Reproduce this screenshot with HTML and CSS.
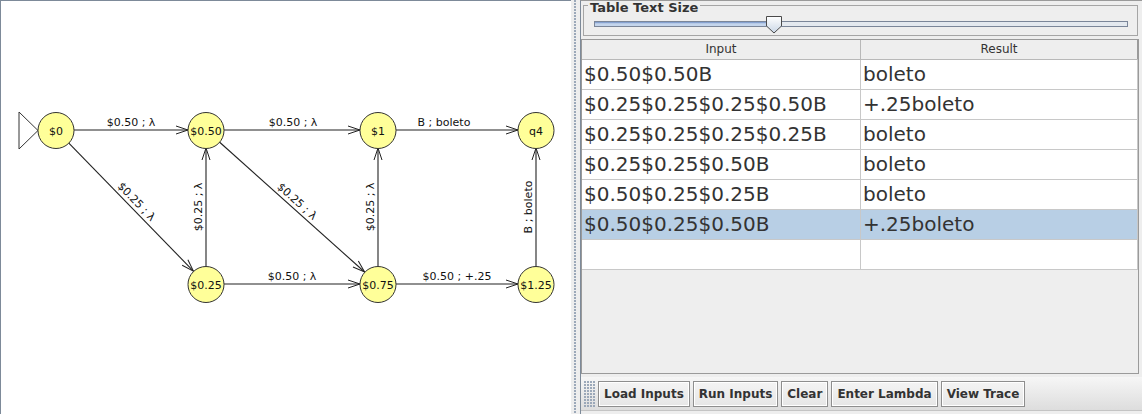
FILE: index.html
```html
<!DOCTYPE html>
<html>
<head>
<meta charset="utf-8">
<link rel="stylesheet" href="styles.css">
</head>
<body>
<div class="app">
  <div class="canvas">
    <svg class="diagram" width="570" height="413" viewBox="0 0 570 413" xmlns="http://www.w3.org/2000/svg">
      <defs>
        <marker id="arr" markerUnits="userSpaceOnUse" markerWidth="16" markerHeight="12" refX="13" refY="6" orient="auto">
          <path d="M1 2 L13 6 L1 10" fill="none" stroke="#222" stroke-width="1"/>
        </marker>
      </defs>
      <g class="edges" stroke="#222" stroke-width="1.1" fill="none">
        <line x1="73" y1="129" x2="187" y2="129" marker-end="url(#arr)"/>
        <line x1="223" y1="129" x2="359" y2="129" marker-end="url(#arr)"/>
        <line x1="395" y1="129" x2="517" y2="129" marker-end="url(#arr)"/>
        <line x1="67.6" y1="141.9" x2="192.4" y2="270.1" marker-end="url(#arr)"/>
        <line x1="205" y1="265" x2="205" y2="147" marker-end="url(#arr)"/>
        <line x1="218.4" y1="141" x2="363.6" y2="271" marker-end="url(#arr)"/>
        <line x1="377" y1="265" x2="377" y2="147" marker-end="url(#arr)"/>
        <line x1="223" y1="283" x2="359" y2="283" marker-end="url(#arr)"/>
        <line x1="395" y1="283" x2="517" y2="283" marker-end="url(#arr)"/>
        <line x1="535" y1="265" x2="535" y2="147" marker-end="url(#arr)"/>
      </g>
      <path class="start" d="M18 111 L37 129.5 L18 148 Z"/>
      <g class="labels">
        <text x="130" y="125">$0.50 ; λ</text>
        <text x="292" y="125">$0.50 ; λ</text>
        <text x="443" y="125">B ; boleto</text>
        <text transform="translate(130 206) rotate(45.75)" x="0" y="-4">$0.25 ; λ</text>
        <text transform="translate(205 206) rotate(-90)" x="0" y="-4">$0.25 ; λ</text>
        <text transform="translate(291 206) rotate(41.84)" x="0" y="-4">$0.25 ; λ</text>
        <text transform="translate(377 206) rotate(-90)" x="0" y="-4">$0.25 ; λ</text>
        <text x="291" y="279">$0.50 ; λ</text>
        <text x="456" y="279">$0.50 ; +.25</text>
        <text transform="translate(535 206) rotate(-90)" x="0" y="-4">B ; boleto</text>
      </g>
      <g class="nodes">
        <circle cx="55" cy="129.5" r="18"/>
        <circle cx="205" cy="129.5" r="18"/>
        <circle cx="377" cy="129.5" r="18"/>
        <circle cx="535" cy="129.5" r="18"/>
        <circle cx="205" cy="283.5" r="18"/>
        <circle cx="377" cy="283.5" r="18"/>
        <circle cx="535" cy="283.5" r="18"/>
      </g>
      <g class="node-labels">
        <text x="55" y="133.5">$0</text>
        <text x="205" y="133.5">$0.50</text>
        <text x="377" y="133.5">$1</text>
        <text x="535" y="133.5">q4</text>
        <text x="205" y="287.5">$0.25</text>
        <text x="377" y="287.5">$0.75</text>
        <text x="535" y="287.5">$1.25</text>
      </g>
    </svg>
  </div>
  <div class="splitter"><div class="dots"></div></div>
  <div class="side">
    <fieldset class="size-box">
      <legend>Table Text Size</legend>
      <div class="slider">
        <div class="track"><div class="fill"></div></div>
        <svg class="thumb" width="16" height="18" viewBox="0 0 16 18" xmlns="http://www.w3.org/2000/svg">
          <defs>
            <linearGradient id="tg" x1="0" y1="0" x2="0" y2="1">
              <stop offset="0" stop-color="#ffffff"/>
              <stop offset="1" stop-color="#c9d6e6"/>
            </linearGradient>
          </defs>
          <path d="M0.5 0.5 H15.5 V10 L8 17 L0.5 10 Z" fill="url(#tg)" stroke="#4a4a4a" stroke-width="1"/>
        </svg>
      </div>
    </fieldset>
    <div class="table-wrap">
      <table class="results">
        <thead>
          <tr><th>Input</th><th>Result</th></tr>
        </thead>
        <tbody>
          <tr><td>$0.50$0.50B</td><td>boleto</td></tr>
          <tr><td>$0.25$0.25$0.25$0.50B</td><td>+.25boleto</td></tr>
          <tr><td>$0.25$0.25$0.25$0.25B</td><td>boleto</td></tr>
          <tr><td>$0.25$0.25$0.50B</td><td>boleto</td></tr>
          <tr><td>$0.50$0.25$0.25B</td><td>boleto</td></tr>
          <tr class="selected"><td>$0.50$0.25$0.50B</td><td>+.25boleto</td></tr>
          <tr><td></td><td></td></tr>
        </tbody>
      </table>
    </div>
    <div class="toolbar">
      <div class="grip"></div>
      <button class="btn">Load Inputs</button>
      <button class="btn">Run Inputs</button>
      <button class="btn">Clear</button>
      <button class="btn">Enter Lambda</button>
      <button class="btn">View Trace</button>
    </div>
  </div>
</div>
</body>
</html>
```

FILE: styles.css
```css
html, body {
  margin: 0;
  padding: 0;
  width: 1142px;
  height: 414px;
  overflow: hidden;
  background: #eeeeee;
  font-family: "DejaVu Sans", sans-serif;
}

.app {
  display: flex;
  width: 1142px;
  height: 414px;
}

.canvas {
  width: 571px;
  height: 414px;
  box-sizing: border-box;
  background: #ffffff;
  border-left: 1px solid #7d8a99;
  border-top: 1px solid #7d8a99;
}

.diagram {
  display: block;
}

.diagram .start {
  fill: none;
  stroke: #333;
  stroke-width: 1;
}

.diagram .labels text {
  font-family: "DejaVu Sans", sans-serif;
  font-size: 11px;
  fill: #111;
  text-anchor: middle;
}

.diagram .nodes circle {
  fill: #ffff99;
  stroke: #333;
  stroke-width: 1;
}

.diagram .node-labels text {
  font-family: "DejaVu Sans", sans-serif;
  font-size: 11px;
  fill: #111;
  text-anchor: middle;
}

.splitter {
  width: 9px;
  height: 414px;
  background: #eeeeee;
  display: flex;
  justify-content: center;
}

.splitter .dots {
  width: 3px;
  height: 414px;
  background-image: radial-gradient(circle at 1px 1px, #9aa7b8 0.7px, transparent 1px);
  background-size: 3px 3px;
}

.side {
  flex: 1;
  height: 414px;
  box-sizing: border-box;
  border-left: 1px solid #7d8a99;
  border-top: 1px solid #9a9a9a;
  display: flex;
  flex-direction: column;
  background: #eeeeee;
}

.size-box {
  margin: 0 4px 0 2px;
  padding: 0;
  border: 1px solid #a5a5a5;
  min-width: 0;
}

.size-box legend {
  font-size: 13px;
  font-weight: bold;
  height: 8px;
  line-height: 14px;
  color: #333;
  padding: 0 2px;
  margin-left: 4px;
}

.slider {
  position: relative;
  height: 26px;
}

.track {
  position: absolute;
  left: 10px;
  right: 9px;
  top: 12px;
  height: 6px;
  box-sizing: border-box;
  border: 1px solid #7b8699;
  background: #e4e9ef;
}

.fill {
  width: 178px;
  height: 100%;
  background: linear-gradient(#6f8fc6, #c4d5ec 45%, #c4d5ec);
}

.thumb {
  position: absolute;
  left: 182px;
  top: 7px;
  display: block;
}

.table-wrap {
  margin: 3px 3px 0 0;
  height: 335px;
  box-sizing: border-box;
  border: 1px solid #9a9a9a;
  background: #eeeeee;
}

.results {
  width: 100%;
  border-collapse: collapse;
  table-layout: fixed;
}

.results th {
  height: 19px;
  padding: 0;
  font-size: 12px;
  font-weight: normal;
  color: #333;
  background: #eeeeee;
  border-right: 1px solid #b8b8b8;
  border-bottom: 1px solid #b8b8b8;
  text-align: center;
  line-height: 19px;
}

.results th:first-child {
  width: 278px;
}

.results th:last-child {
  border-right: 1px solid #9a9a9a;
}

.results td {
  height: 29px;
  padding: 0 0 0 2px;
  font-size: 20px;
  color: #333;
  background: #ffffff;
  border-right: 1px solid #c8c8c8;
  border-bottom: 1px solid #c8c8c8;
  white-space: nowrap;
  overflow: hidden;
  line-height: 29px;
}

.results tr.selected td {
  background: #b8cfe5;
}

.toolbar {
  margin-top: 3px;
  height: 34px;
  box-sizing: border-box;
  border-bottom: 1px solid #c4c4c4;
  background: linear-gradient(#f6f6f6, #dddddd);
  display: flex;
  align-items: center;
  gap: 3px;
  padding-left: 3px;
}

.grip {
  width: 11px;
  height: 26px;
  background-image: radial-gradient(circle at 1px 1px, #9aa7b8 0.7px, transparent 1px);
  background-size: 3px 3px;
}

.btn {
  height: 26px;
  margin: 0;
  padding: 0 5px;
  font-family: "DejaVu Sans", sans-serif;
  font-size: 12px;
  font-weight: bold;
  color: #333;
  border: 1px solid #8e8e8e;
  box-shadow: inset 0 0 0 1px #ffffff;
  background: linear-gradient(#f4f4f4, #e6e6e6);
  border-radius: 0;
}
```
